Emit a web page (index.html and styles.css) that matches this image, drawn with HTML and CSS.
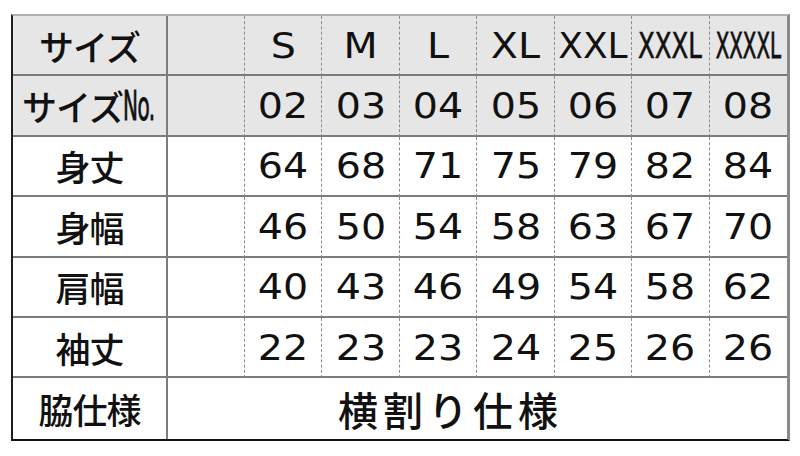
FILE: index.html
```html
<!DOCTYPE html>
<html lang="ja">
<head>
<meta charset="utf-8">
<title>サイズ表</title>
<link rel="stylesheet" href="styles.css">
</head>
<body>
<div class="sheet">
  <div class="c hd lab">サイズ</div>
  <div class="c hd gap"></div>
  <div class="c hd sz"><span class="w">S</span></div>
  <div class="c hd sz"><span class="w">M</span></div>
  <div class="c hd sz"><span class="w">L</span></div>
  <div class="c hd sz"><span class="w">XL</span></div>
  <div class="c hd sz"><span class="x2">XXL</span></div>
  <div class="c hd sz"><span class="x3">XXXL</span></div>
  <div class="c hd sz last"><span class="x4">XXXXL</span></div>

  <div class="c hd lab">サイズ<span class="no">No.</span></div>
  <div class="c hd gap"></div>
  <div class="c hd sz"><span class="w">02</span></div>
  <div class="c hd sz"><span class="w">03</span></div>
  <div class="c hd sz"><span class="w">04</span></div>
  <div class="c hd sz"><span class="w">05</span></div>
  <div class="c hd sz"><span class="w">06</span></div>
  <div class="c hd sz"><span class="w">07</span></div>
  <div class="c hd sz last"><span class="w">08</span></div>

  <div class="c lab">身丈</div>
  <div class="c gap"></div>
  <div class="c sz"><span class="w">64</span></div>
  <div class="c sz"><span class="w">68</span></div>
  <div class="c sz"><span class="w">71</span></div>
  <div class="c sz"><span class="w">75</span></div>
  <div class="c sz"><span class="w">79</span></div>
  <div class="c sz"><span class="w">82</span></div>
  <div class="c sz last"><span class="w">84</span></div>

  <div class="c lab">身幅</div>
  <div class="c gap"></div>
  <div class="c sz"><span class="w">46</span></div>
  <div class="c sz"><span class="w">50</span></div>
  <div class="c sz"><span class="w">54</span></div>
  <div class="c sz"><span class="w">58</span></div>
  <div class="c sz"><span class="w">63</span></div>
  <div class="c sz"><span class="w">67</span></div>
  <div class="c sz last"><span class="w">70</span></div>

  <div class="c lab">肩幅</div>
  <div class="c gap"></div>
  <div class="c sz"><span class="w">40</span></div>
  <div class="c sz"><span class="w">43</span></div>
  <div class="c sz"><span class="w">46</span></div>
  <div class="c sz"><span class="w">49</span></div>
  <div class="c sz"><span class="w">54</span></div>
  <div class="c sz"><span class="w">58</span></div>
  <div class="c sz last"><span class="w">62</span></div>

  <div class="c lab">袖丈</div>
  <div class="c gap"></div>
  <div class="c sz"><span class="w">22</span></div>
  <div class="c sz"><span class="w">23</span></div>
  <div class="c sz"><span class="w">23</span></div>
  <div class="c sz"><span class="w">24</span></div>
  <div class="c sz"><span class="w">25</span></div>
  <div class="c sz"><span class="w">26</span></div>
  <div class="c sz last"><span class="w">26</span></div>

  <div class="c lab end">脇仕様</div>
  <div class="c merged end">横割り仕様</div>
</div>
</body>
</html>
```
FILE: styles.css
```css
html, body {
  margin: 0;
  padding: 0;
  background: #fff;
}
body {
  padding: 14px 0 0 11px;
}
.sheet {
  box-sizing: border-box;
  width: 779px;
  display: grid;
  grid-template-columns: 155px 77px repeat(7, 1fr);
  grid-template-rows: repeat(7, 60.4px);
  border-top: 2px solid #b0b0b0;
  border-left: 2px solid #1e1e1e;
  border-right: 3px solid #8a8a8a;
  border-bottom: 2px solid #111;
  background: #fff;
  color: #111;
}
.c {
  box-sizing: border-box;
  display: flex;
  align-items: center;
  justify-content: center;
  border-bottom: 2px solid #7c7c7c;
  white-space: nowrap;
  overflow: visible;
  min-width: 0;
}
.c.end {
  border-bottom: none;
}
.hd {
  background: #e6e6e6;
}
.lab {
  border-right: 2px solid #7c7c7c;
  font-family: "Noto Sans CJK JP", sans-serif;
  font-weight: 500;
  font-size: 35px;
  letter-spacing: -1px;
}
.gap, .sz {
  border-right: 1px dashed #8c8c8c;
}
.sz.last {
  border-right: none;
}
.sz {
  font-family: "DejaVu Sans", sans-serif;
  font-size: 36px;
}
.w {
  display: inline-block;
  transform: scaleX(1.1);
}
.x2 {
  display: inline-block;
}
.x3 {
  display: inline-block;
  transform: scaleX(0.68);
  -webkit-text-stroke: 0.6px #111;
}
.x4 {
  display: inline-block;
  transform: scaleX(0.55);
  -webkit-text-stroke: 0.8px #111;
}
.no {
  display: inline-block;
  font-family: "DejaVu Sans", sans-serif;
  font-size: 40px;
  width: 34px;
  transform: scaleX(0.5);
  transform-origin: left center;
  letter-spacing: -1px;
  -webkit-text-stroke: 0.9px #111;
}
.merged {
  grid-column: 2 / -1;
  font-family: "Noto Sans CJK JP", sans-serif;
  font-weight: 500;
  font-size: 40px;
  letter-spacing: 5px;
  padding-right: 54px;
}
```
